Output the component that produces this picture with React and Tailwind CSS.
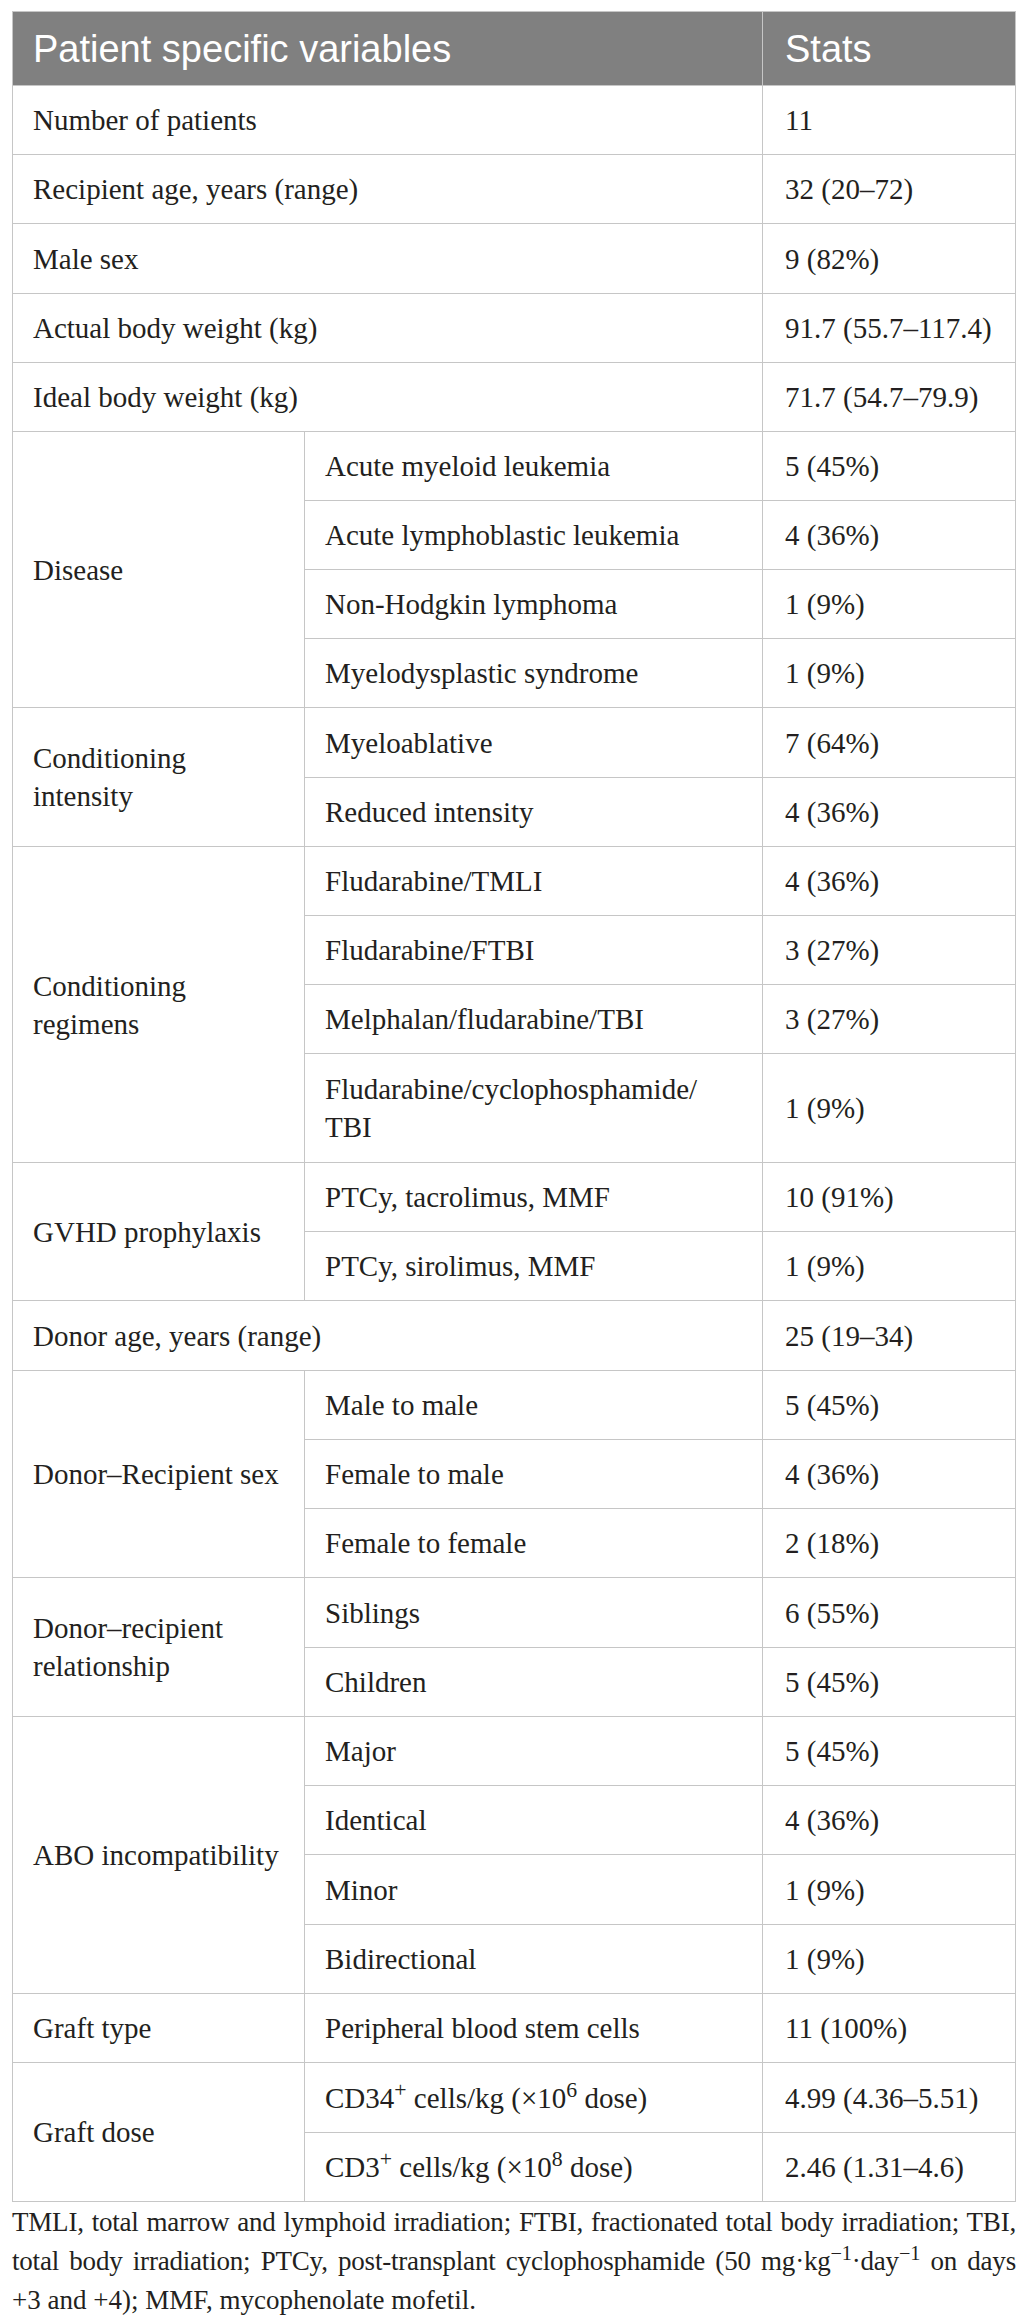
const serif = { fontFamily: '"Liberation Serif", "Times New Roman", serif' }
const sans = { fontFamily: '"Liberation Sans", Arial, sans-serif' }

// each group: label in column 1, rows in columns 2-3; label spans both when there are no sub rows
const groups = [
  { label: 'Number of patients', value: '11', h: 'h-[68px]' },
  { label: 'Recipient age, years (range)', value: '32 (20–72)', h: 'h-[68px]' },
  { label: 'Male sex', value: '9 (82%)', h: 'h-[69px]' },
  { label: 'Actual body weight (kg)', value: '91.7 (55.7–117.4)', h: 'h-[68px]' },
  { label: 'Ideal body weight (kg)', value: '71.7 (54.7–79.9)', h: 'h-[68px]' },
  {
    label: 'Disease',
    span: 'row-span-4',
    rows: [
      { sub: 'Acute myeloid leukemia', value: '5 (45%)', h: 'h-[68px]' },
      { sub: 'Acute lymphoblastic leukemia', value: '4 (36%)', h: 'h-[68px]' },
      { sub: 'Non-Hodgkin lymphoma', value: '1 (9%)', h: 'h-[68px]' },
      { sub: 'Myelodysplastic syndrome', value: '1 (9%)', h: 'h-[68px]' },
    ],
  },
  {
    label: (
      <>
        Conditioning
        <br />
        intensity
      </>
    ),
    span: 'row-span-2',
    rows: [
      { sub: 'Myeloablative', value: '7 (64%)', h: 'h-[69px]' },
      { sub: 'Reduced intensity', value: '4 (36%)', h: 'h-[68px]' },
    ],
  },
  {
    label: (
      <>
        Conditioning
        <br />
        regimens
      </>
    ),
    span: 'row-span-4',
    rows: [
      { sub: 'Fludarabine/TMLI', value: '4 (36%)', h: 'h-[68px]' },
      { sub: 'Fludarabine/FTBI', value: '3 (27%)', h: 'h-[68px]' },
      { sub: 'Melphalan/fludarabine/TBI', value: '3 (27%)', h: 'h-[68px]' },
      {
        sub: (
          <>
            Fludarabine/cyclophosphamide/
            <br />
            TBI
          </>
        ),
        value: '1 (9%)',
        h: 'h-[108px]',
      },
    ],
  },
  {
    label: 'GVHD prophylaxis',
    span: 'row-span-2',
    rows: [
      { sub: 'PTCy, tacrolimus, MMF', value: '10 (91%)', h: 'h-[68px]' },
      { sub: 'PTCy, sirolimus, MMF', value: '1 (9%)', h: 'h-[68px]' },
    ],
  },
  { label: 'Donor age, years (range)', value: '25 (19–34)', h: 'h-[69px]' },
  {
    label: 'Donor–Recipient sex',
    span: 'row-span-3',
    rows: [
      { sub: 'Male to male', value: '5 (45%)', h: 'h-[68px]' },
      { sub: 'Female to male', value: '4 (36%)', h: 'h-[68px]' },
      { sub: 'Female to female', value: '2 (18%)', h: 'h-[68px]' },
    ],
  },
  {
    label: (
      <>
        Donor–recipient
        <br />
        relationship
      </>
    ),
    span: 'row-span-2',
    rows: [
      { sub: 'Siblings', value: '6 (55%)', h: 'h-[69px]' },
      { sub: 'Children', value: '5 (45%)', h: 'h-[68px]' },
    ],
  },
  {
    label: 'ABO incompatibility',
    span: 'row-span-4',
    rows: [
      { sub: 'Major', value: '5 (45%)', h: 'h-[68px]' },
      { sub: 'Identical', value: '4 (36%)', h: 'h-[68px]' },
      { sub: 'Minor', value: '1 (9%)', h: 'h-[69px]' },
      { sub: 'Bidirectional', value: '1 (9%)', h: 'h-[68px]' },
    ],
  },
  {
    label: 'Graft type',
    span: 'row-span-1',
    rows: [{ sub: 'Peripheral blood stem cells', value: '11 (100%)', h: 'h-[68px]' }],
  },
  {
    label: 'Graft dose',
    span: 'row-span-2',
    rows: [
      {
        sub: (
          <>
            CD34<sup>+</sup> cells/kg (×10<sup>6</sup> dose)
          </>
        ),
        value: '4.99 (4.36–5.51)',
        h: 'h-[69px]',
      },
      {
        sub: (
          <>
            CD3<sup>+</sup> cells/kg (×10<sup>8</sup> dose)
          </>
        ),
        value: '2.46 (1.31–4.6)',
        h: 'h-[68px]',
      },
    ],
  },
]

function Cell({ children, className = '' }) {
  return <div className={`bg-white flex items-center pl-[20px] pr-[8px] ${className}`}>{children}</div>
}

export default function App() {
  return (
    <div className="bg-white min-h-[2324px] w-[1026px] pt-[11px] pl-[12px] text-[#231f20]">
      <div
        className="w-[1004px] grid grid-cols-[291px_457px_252px] gap-px bg-[#c6c6c6] border border-[#c6c6c6] text-[29px] leading-[38px]"
        style={serif}
      >
        {/* header */}
        <div className="col-span-2 h-[73px] bg-[#808080] text-white flex items-center pl-[20px] text-[38px]" style={sans}>
          Patient specific variables
        </div>
        <div className="h-[73px] bg-[#808080] text-white flex items-center pl-[22px] text-[38px]" style={sans}>
          Stats
        </div>

        {groups.map((g, i) =>
          g.rows ? (
            [
              <Cell key={`l${i}`} className={g.span}>
                <span>{g.label}</span>
              </Cell>,
              ...g.rows.flatMap((r, j) => [
                <Cell key={`s${i}-${j}`} className={r.h}>
                  <span>{r.sub}</span>
                </Cell>,
                <Cell key={`v${i}-${j}`} className={`${r.h} !pl-[22px]`}>
                  {r.value}
                </Cell>,
              ]),
            ]
          ) : (
            [
              <Cell key={`l${i}`} className={`col-span-2 ${g.h}`}>
                {g.label}
              </Cell>,
              <Cell key={`v${i}`} className={`${g.h} !pl-[22px]`}>
                {g.value}
              </Cell>,
            ]
          )
        )}
      </div>

      {/* footnote, broken where the reference breaks it */}
      <div className="w-[1004px] pt-px text-[27px] leading-[39px] whitespace-nowrap" style={serif}>
        <div className="text-justify [text-align-last:justify] tracking-[-0.2px]">
          TMLI, total marrow and lymphoid irradiation; FTBI, fractionated total body irradiation; TBI,
        </div>
        <div className="text-justify [text-align-last:justify] tracking-[-0.2px]">
          total body irradiation; PTCy, post-transplant cyclophosphamide (50 mg·kg<sup>−1</sup>·day<sup>−1</sup> on days
        </div>
        <div>+3 and +4); MMF, mycophenolate mofetil.</div>
      </div>
    </div>
  )
}
